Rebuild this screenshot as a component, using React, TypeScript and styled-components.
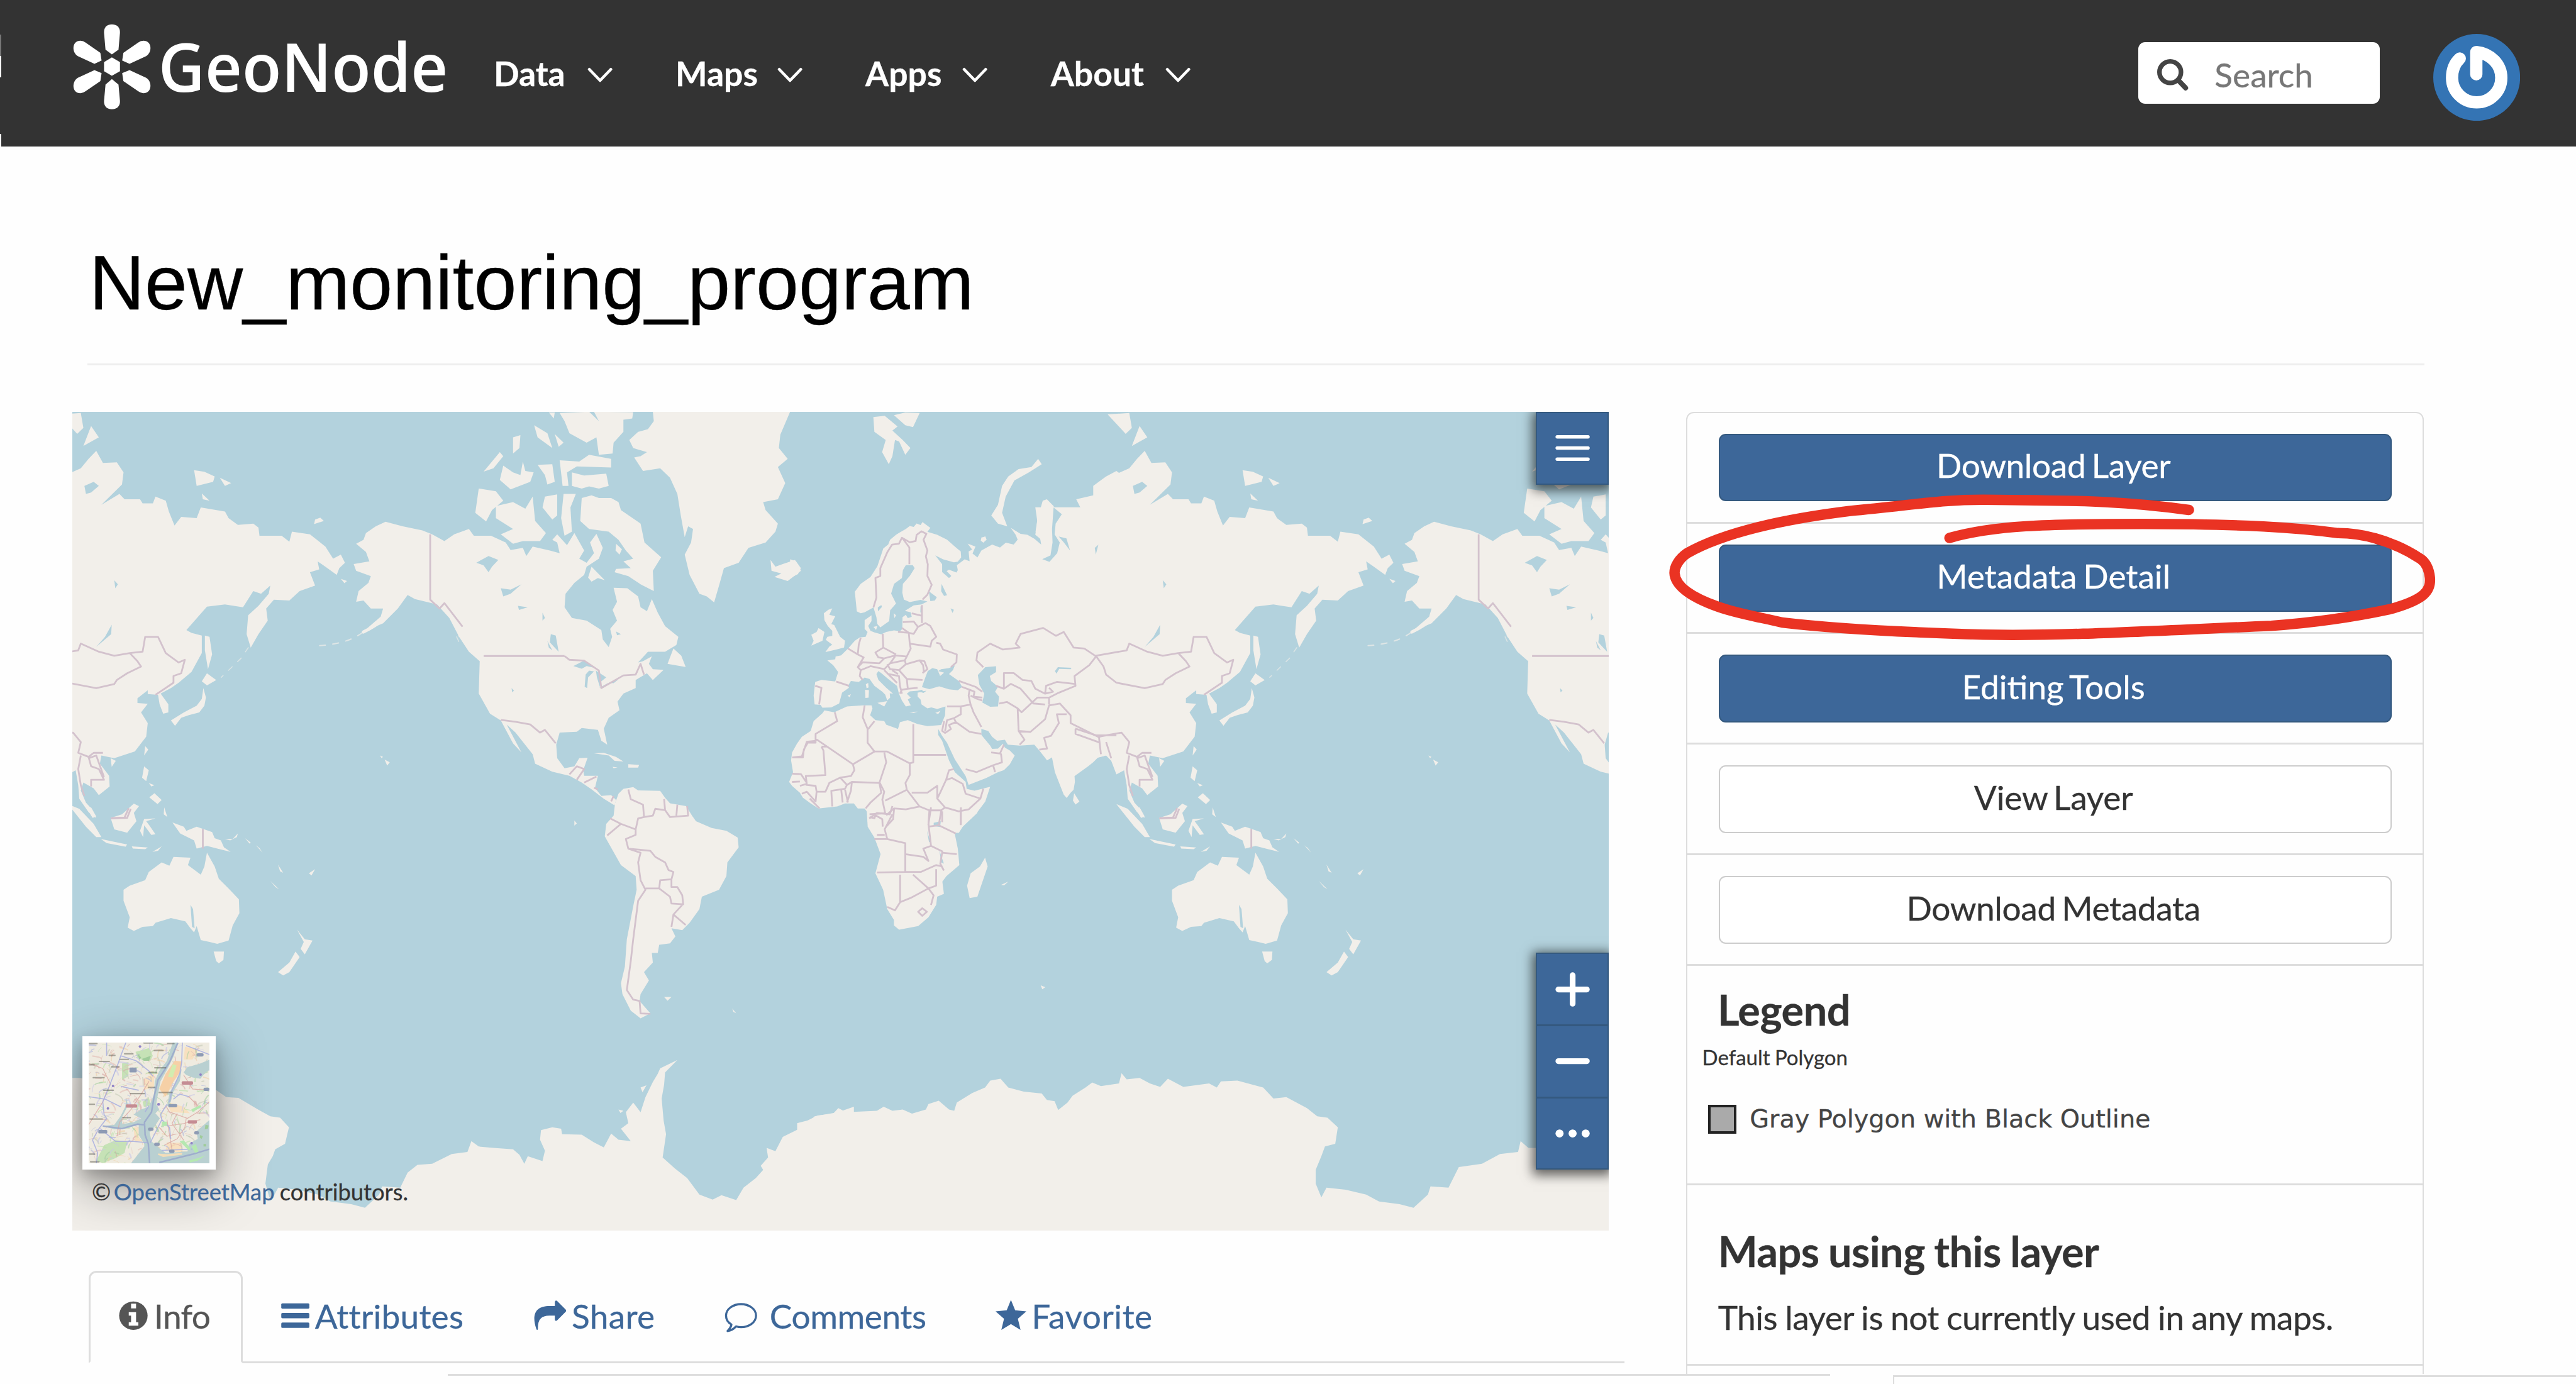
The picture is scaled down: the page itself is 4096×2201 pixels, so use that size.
import React from 'react';
import styled, { createGlobalStyle, css } from 'styled-components';

/* The design grid is 6700 units wide; u() turns grid units into pixels. */
const SCALE = 4096 / 6700;
const u = (n: number) => `${(n * SCALE).toFixed(2)}px`;

const blue = '#3d6799';
const blueDark = '#34597f';
const ink = '#333';
const line = '#ddd';
const water = '#b3d2dd';
const land = '#f2efea';

const GlobalStyle = createGlobalStyle`
  *, *::before, *::after { box-sizing: border-box; }
  html, body { margin: 0; padding: 0; background: #fff; }
  body {
    font-family: Lato, "Open Sans", sans-serif;
    color: ${ink};
    overflow: hidden;
    word-spacing: -0.07em;
    font-variant-ligatures: none;
    -webkit-text-stroke: 0.3px currentColor;
  }
`;

const Page = styled.div`
  position: relative;
  width: 4096px;
  height: 2201px;
  overflow: hidden;
  background: #fefefe;
`;

/* ---------- header ---------- */
const Header = styled.header`
  display: flex;
  align-items: flex-start;
  height: ${u(381)};
  background:
    linear-gradient(
      #333 ${u(90)}, #777 ${u(90)}, #777 ${u(145)}, #fff ${u(145)}, #fff ${u(201)},
      #333 ${u(201)}, #333 ${u(348)}, #fff ${u(348)}
    ) left top / ${u(4)} 100% no-repeat,
    #333;
  color: #fff;
`;

const Logo = styled.svg`
  flex: none;
  width: ${u(1284)};
  height: ${u(381)};
  -webkit-text-stroke: 0;
`;

const NavItem = styled.a<{ $w: number; $text: number }>`
  display: flex;
  align-items: flex-start;
  flex: none;
  width: ${p => u(p.$w)};
  padding-top: ${u(137)};
  font-size: ${u(87.5)};
  line-height: ${u(106)};
  font-weight: 700;
  span { width: ${p => u(p.$text)}; white-space: nowrap; }
  svg { width: ${u(66)}; height: ${u(44)}; margin-top: ${u(36)}; }
`;

const HeaderSpace = styled.div`
  flex: 1;
`;

const SearchBox = styled.div`
  display: flex;
  flex: none;
  width: ${u(629)};
  height: ${u(161)};
  margin-top: ${u(109)};
  border-radius: ${u(18)};
  background: #fff;
  color: #777;
  font-size: ${u(87)};
  line-height: ${u(170)};
  padding-left: ${u(49)};
  svg { width: ${u(82)}; height: ${u(82)}; margin: ${u(45)} ${u(68)} 0 0; }
`;

const Avatar = styled.svg`
  flex: none;
  width: ${u(226)};
  height: ${u(226)};
  margin: ${u(88)} ${u(146)} 0 ${u(138)};
`;

/* ---------- page body ---------- */
const Title = styled.h1`
  margin: ${u(245)} 0 0 ${u(232)};
  font: 400 ${u(200)} / ${u(220)} "Liberation Sans", Arial, sans-serif;
  color: #000;
  white-space: nowrap;
`;

const Rule = styled.hr`
  width: ${u(6077)};
  height: ${u(4)};
  margin: ${u(100)} 0 0 ${u(228)};
  border: 0;
  background: #eee;
`;

const Columns = styled.main`
  display: flex;
  align-items: flex-start;
  height: ${u(2505)};
  margin-top: ${u(119)};
  overflow: hidden;
`;

const MapColumn = styled.section`
  flex: none;
  width: ${u(4037)};
  margin: ${u(2)} 0 0 ${u(188)};
`;

const MapFrame = styled.div`
  position: relative;
  width: ${u(3997)};
  height: ${u(2130)};
  overflow: hidden;
  background: ${water};
`;

const WorldSvg = styled.svg`
  display: block;
  width: 100%;
  height: 100%;
`;

const MapButtons = styled.div<{ $top: number }>`
  position: absolute;
  right: 0;
  top: ${p => u(p.$top)};
  width: ${u(191)};
  background: ${blue};
  border: ${u(4)} solid ${blueDark};
  box-shadow: 0 ${u(6)} ${u(28)} ${u(8)} rgba(0, 0, 0, 0.6);
`;

const MapButton = styled.div<{ $h: number }>`
  display: flex;
  align-items: center;
  justify-content: center;
  height: ${p => u(p.$h)};
  & + & { border-top: ${u(5)} solid ${blueDark}; }
  svg { width: ${u(100)}; height: ${u(100)}; }
`;

const Thumb = styled.div`
  position: absolute;
  left: ${u(26)};
  top: ${u(1625.5)};
  width: ${u(347)};
  height: ${u(346)};
  padding: ${u(16)};
  background: #fff;
  box-shadow: 0 ${u(40)} ${u(130)} ${u(4)} rgba(0, 0, 0, 0.38), 0 ${u(16)} ${u(40)} rgba(0, 0, 0, 0.22);
  svg { display: block; width: 100%; height: 100%; }
`;

const Attribution = styled.div`
  position: absolute;
  left: ${u(51)};
  top: ${u(1995)};
  font-size: ${u(59.5)};
  line-height: ${u(70)};
  white-space: nowrap;
  a { margin-left: ${u(-6)}; color: ${blue}; }
`;

const Tabs = styled.nav`
  display: flex;
  width: ${u(3995)};
  height: ${u(240)};
  margin: ${u(105)} 0 0 ${u(42)};
  font-size: ${u(87)};
  line-height: ${u(106)};
`;

const Tab = styled.a<{ $active?: boolean; $w?: number; $pad: number; $gap: number; $track?: number }>`
  display: flex;
  flex: ${p => (p.$w ? 'none' : '1')};
  width: ${p => (p.$w ? u(p.$w) : 'auto')};
  padding: ${u(65)} 0 0 ${p => u(p.$pad)};
  white-space: nowrap;
  letter-spacing: ${p => u(p.$track ?? 0)};
  color: ${blue};
  border-bottom: ${u(5)} solid ${line};
  ${p =>
    p.$active &&
    css`
      color: #555;
      border: ${u(5)} solid ${line};
      border-bottom-color: transparent;
      border-radius: ${u(20)} ${u(20)} 0 0;
      padding-top: ${u(60)};
    `}
  svg { flex: none; width: ${u(86)}; height: ${u(86)}; margin: ${u(9)} ${p => u(p.$gap)} 0 0; }
`;

/* ---------- sidebar ---------- */
const Panel = styled.aside`
  flex: none;
  width: ${u(1919)};
  height: ${u(2600)};
  margin: ${u(2)} 0 0 ${u(161)};
  border: ${u(4)} solid ${line};
  border-radius: ${u(20)} ${u(20)} 0 0;
`;

const PanelRow = styled.div<{ $h?: number }>`
  height: ${p => u(p.$h ?? 287.7)};
  padding: ${u(54)} ${u(81)} 0 ${u(81)};
  border-bottom: ${u(5)} solid ${line};
`;

const Button = styled.button<{ $primary?: boolean; $track: number }>`
  display: block;
  width: 100%;
  height: ${u(176)};
  padding: 0 ${u(9)} ${u(9)} 0;
  border: ${u(4)} solid ${p => (p.$primary ? blueDark : '#ccc')};
  border-radius: ${u(18)};
  background: ${p => (p.$primary ? blue : '#fff')};
  color: ${p => (p.$primary ? '#fff' : ink)};
  font: 400 ${u(87)} / ${u(158)} Lato, "Open Sans", sans-serif;
  word-spacing: -0.07em;
  letter-spacing: ${p => u(p.$track)};
  text-align: center;
`;

const LegendRow = styled(PanelRow)`
  padding: ${u(49)} 0 0 ${u(38)};
`;

const Heading = styled.h4<{ $indent?: number; $track?: number }>`
  margin: 0 0 0 ${p => u(p.$indent ?? 0)};
  font-size: ${u(109)};
  line-height: ${u(130)};
  font-weight: 700;
  letter-spacing: ${p => u(p.$track ?? 0)};
  white-space: nowrap;
`;

const LegendName = styled.div`
  margin-top: ${u(22)};
  font-size: ${u(54)};
  line-height: ${u(72)};
`;

const LegendItem = styled.div`
  display: flex;
  align-items: center;
  margin: ${u(87)} 0 0 ${u(15)};
  font: 400 ${u(65)} / ${u(78)} "DejaVu Sans", sans-serif;
  word-spacing: 0;
  color: #444;
  white-space: nowrap;
`;

const Swatch = styled.i`
  width: ${u(74)};
  height: ${u(74)};
  margin-right: ${u(35)};
  background: #aaa;
  border: ${u(8)} solid #222;
`;

const UsageRow = styled(PanelRow)`
  padding: ${u(107)} 0 0 ${u(79)};
  p { margin: ${u(55)} 0 0; font-size: ${u(87)}; line-height: ${u(106)}; letter-spacing: ${u(-0.78)}; white-space: nowrap; }
`;

const BottomStrip = styled.div`
  display: flex;
  height: ${u(30)};
  padding-left: ${u(1165)};
`;

const StripLine = styled.div`
  width: ${u(3595)};
  margin-right: ${u(163)};
  border-top: ${u(5)} solid ${line};
`;

const StripBox = styled.div`
  flex: 1;
  margin-top: ${u(4)};
  border: solid ${line};
  border-width: ${u(5)} 0 0 ${u(4)};
`;

const Scribble = styled.svg`
  position: absolute;
  left: ${u(4300)};
  top: ${u(1000)};
  width: ${u(2100)};
  height: ${u(1500)};
  pointer-events: none;
`;

/* ---------- world map data ---------- */
const T_WEST = 'translate(180 1060) scale(1.27551 .70153)';
const T_EAST = 'translate(2100 1060) scale(1.33929 .70153)';
const T_SWEST = 'translate(180 2100) scale(1.27551 .71429)';
const T_SEAST = 'translate(2100 2100) scale(1.33929 .71429)';
const T_MID = 'translate(2060 1350) scale(.5102)';

const europeAfrica =
  'M330 470L320 370 350 330 400 295 435 240 455 180 465 150 490 130 500 105 530 80 545 70 580 50 600 35 620 40 635 22 655 30 665 15 705 45 690 65 740 80 790 105 830 140 860 165 862 195 845 217 825 220 770 205 730 185 765 230 765 270 800 300 812 290 788 265 800 258 838 272 845 260 840 235 880 205 905 215 900 165 918 155 895 125 935 140 920 175 945 195 965 160 1020 130 1060 145 1090 120 1130 130 1150 105 1140 80 1115 45 1165 75 1200 80 1235 100 1270 130 1265 100 1240 80 1250 10 1240 -60 1600 -60 1600 1205 1560 1215 1535 1240 1510 1260 1440 1310 1442 1340 1435 1380 1420 1395 1400 1422 1385 1405 1340 1290 1325 1215 1300 1230 1265 1185 1235 1150 1160 1155 1100 1150 1085 1125 1045 1130 1020 1110 1000 1080 965 1070 965 1100 1010 1155 1020 1172 1050 1170 1075 1145 1085 1165 1110 1180 1135 1205 1110 1250 1080 1280 1050 1290 990 1320 900 1355 885 1310 830 1225 790 1140 765 1105 745 1070 745 1100 765 1130 800 1230 830 1290 885 1340 890 1375 930 1385 1010 1365 985 1440 940 1500 870 1568 850 1600 405 1600 385 1540 395 1510 370 1475 335 1475 315 1450 270 1450 230 1465 135 1475 95 1450 55 1420 40 1395 0 1360 -15 1340 5 1290 -5 1230 0 1190 25 1145 50 1110 95 1080 110 1030 155 990 165 975 215 985 280 955 360 950 405 950 410 965 398 1000 425 1025 470 1030 480 1048 540 1070 550 1035 590 1025 640 1045 690 1055 760 1050 780 1000 782 955 740 968 710 960 690 965 660 945 655 920 640 905 640 885 670 880 662 870 640 875 600 878 585 890 605 910 590 920 605 950 580 955 560 925 545 890 535 850 490 815 455 785 440 775 430 790 440 820 480 860 515 890 498 888 500 910 485 925 475 895 460 880 420 850 395 815 370 808 340 830 300 825 285 850 290 860 255 885 240 940 200 960 155 962 145 947 115 945 110 900 118 830 150 820 220 828 235 780 210 745 180 720 220 715 222 700 250 695 285 660 320 620 345 603 375 600 385 575 370 560 370 515 405 490 405 520 388 545 400 570 420 578 455 587 480 575 520 567 550 572 562 560 563 500 580 488 590 505 610 498 605 475 575 468 620 440 660 435 690 420 655 412 600 423 570 410 562 375 565 330 600 290 625 250 615 235 580 235 565 260 560 300 520 330 505 380 530 430 500 465 495 520 450 552 435 535 430 500 415 450 370 475 350 480Z';
const europeIslands =
  'M185 462L162 480 165 515 182 545 205 570 205 595 180 600 172 615 205 640 190 650 170 678 225 665 265 655 270 620 245 600 215 540 200 535 220 495 190 488 205 455ZM135 555L165 575 155 620 98 645 110 620 98 590 125 575ZM372 870L392 872 390 910 374 912ZM376 842L388 835 390 858 380 862ZM435 937L485 928 470 955ZM598 983L640 982 620 988ZM730 988L757 978 745 994ZM1438 1398L1465 1440 1445 1455 1432 1435ZM965 95L985 88 992 105 975 120 962 110ZM415 550L435 545 428 565ZM518 480L530 490 522 505ZM283 900L300 893 293 908ZM-10 205L20 215 45 250 30 280 -10 300Z';
const europeWater =
  'M662 857L680 805 692 775 715 760 740 765 755 800 775 783 745 775 760 765 800 760 830 745 820 770 800 790 850 825 867 855 845 873 800 868 750 853 700 867ZM985 755L1040 750 1040 780 1008 800 1015 825 1050 855 1035 880 1055 905 1050 955 1010 957 970 935 980 890 955 845 947 795ZM650 880L685 875 670 886ZM697 368L738 398 728 415 705 418ZM762 330L790 388 775 392 760 368ZM437 450L455 438 458 448 438 470ZM808 455L825 462 818 478ZM722 1548L758 1540 755 1570 722 1565ZM1340 775L1355 755 1425 758 1420 765 1362 764 1348 788ZM655 445L662 445 662 478 654 475Z';
const asia =
  'M460 600L458 505 443 460 447 410 457 345 465 340 478 365 485 400 500 370 515 375 535 410 540 460 534 440 530 410 530 370 522 340 555 325 555 290 580 255 600 235 605 242 625 225 640 190 655 160 668 205 695 203 708 240 705 285 665 360 700 320 710 340 740 340 745 355 765 355 770 330 790 345 796 385 807 437 820 405 850 410 858 370 905 385 912 410 930 435 960 430 970 445 972 475 1015 475 1030 497 1035 460 1070 470 1100 515 1115 560 1130 545 1138 575 1127 595 1122 620 1100 590 1085 570 1088 600 1070 610 1080 660 1050 680 1030 715 1000 712 985 745 988 790 970 840 955 890 947 840 950 770 970 735 990 690 993 660 975 690 960 680 940 740 905 730 870 738 830 825 840 835 860 845 860 910 840 980 815 1020 800 1040 780 1060 795 1100 795 1130 785 1135 778 1100 775 1065 755 1062 755 1048 735 1078 735 1095 755 1098 742 1130 755 1170 752 1220 730 1275 690 1300 665 1290 662 1320 680 1365 681 1405 660 1437 650 1412 630 1390 625 1420 635 1465 647 1490 655 1522 640 1500 622 1450 620 1400 615 1345 600 1360 590 1310 580 1290 560 1300 545 1200 440 1180 430 600Z';
const asiaIslands =
  'M448 190L455 210 430 240 402 270 385 330 378 390 388 440 370 430 357 400 370 360 378 290 390 255 410 228 435 220ZM128 35L150 30 175 70 165 85 185 120 200 150 190 175 178 125 170 120 165 180 158 210 145 165 152 120 130 90ZM168 28L190 18 218 20 205 72 190 65ZM583 25L625 20 630 75 618 97 600 60ZM645 68L660 110 630 142ZM845 232L865 238 885 255 882 275 850 290ZM895 260L917 280 905 290ZM860 318L875 345 862 340ZM1080 415L1090 408 1097 420 1078 432ZM866 845L875 850 880 915 872 970 866 900ZM870 985L888 1010 870 1030 860 1015ZM863 1040L868 1075 865 1105 855 1130 835 1140 820 1150 808 1180 800 1160 825 1130 850 1105 860 1080ZM750 1255L756 1268 748 1290ZM683 1300L693 1310 685 1332ZM748 1330L757 1345 752 1385 744 1372ZM768 1430L782 1455 774 1470 758 1445ZM757 1392L768 1400 762 1405ZM338 480L347 485 342 500ZM1130 635l12 8 -5 8ZM1215 1305l10 10 -5 12ZM1206 1290l6 5 -3 4Z';
const asiaWater =
  'M478 370L494 395 482 430 480 470 490 500 485 540 470 572 456 562 472 548 476 500 475 450ZM488 478L503 485 510 530 498 500ZM685 805L684 840 655 887 672 850ZM632 290L650 275 660 290 645 315 635 320ZM558 520L565 508 560 545ZM690 640L697 655 692 670Z';
const southAfricaEtc =
  'M115 5L117 70 130 110 142 170 132 240 147 300 155 370 168 410 168 430 178 445 215 432 235 400 250 355 252 325 265 315 262 270 270 250 295 210 292 150 286 95 301 70 330 20 330 -20 130 -20ZM345 183L350 215 330 325 315 330 310 285 317 240 335 215ZM600 -12L622 5 650 60 665 108 655 108 635 70ZM636 2L648 38 655 33 645 0ZM683 38L705 25 728 -14 738 -5 728 20 733 50 715 92 690 80ZM664 115L690 125 715 135 712 143 675 130ZM724 142L755 146 750 152 726 150ZM764 162L782 142 775 158ZM748 42L770 40 752 50 758 65 770 98 762 100 748 65 746 108 740 85ZM803 55L825 70 830 85 850 70 880 90 885 112 897 120 903 145 916 162 890 150 870 140 850 150 845 120 818 95ZM905 115L920 115 930 95 928 108 915 120ZM944 112L955 128 953 132ZM965 138L972 148 978 165ZM708 300L720 285 750 265 757 235 782 200 797 212 805 180 838 183 833 210 858 245 865 215 870 165 885 215 893 260 912 295 932 335 933 385 920 430 912 485 890 497 875 490 858 483 850 432 845 455 838 440 828 415 800 403 770 420 765 432 745 435 728 450 716 438 720 400 708 340ZM883 525L903 525 902 555 893 568 888 560ZM1045 445L1060 480 1075 485 1060 535 1052 515 1058 490ZM1042 525L1050 545 1030 600 1018 612 1008 600 1030 565ZM1068 240L1080 225 1073 248ZM993 268L1010 298 1003 290ZM1008 208l10 30 -6 -5ZM453 648L462 655 456 662ZM376 282l14 -12 -8 14ZM787 0l6 35 -7 -10Z';
const northAmerica =
  'M645 423L680 440 720 455 740 470 765 495 785 470 815 450 825 475 860 475 890 500 900 528 925 520 932 550 945 515 980 530 1000 540 995 500 985 490 995 470 1015 510 1030 465 1050 530 1040 560 1055 575 1070 540 1062 500 1075 468 1088 520 1080 560 1055 590 1050 620 1030 650 1012 690 1010 740 1025 780 1055 790 1085 825 1088 860 1100 888 1107 850 1103 820 1117 790 1108 750 1117 720 1110 668 1138 670 1160 700 1165 740 1178 755 1188 710 1200 760 1215 810 1242 850 1238 880 1215 905 1180 905 1160 945 1170 940 1188 922 1182 950 1190 970 1212 972 1190 1010 1178 985 1155 1010 1155 1040 1130 1060 1118 1090 1122 1122 1100 1150 1090 1190 1097 1250 1085 1235 1078 1195 1045 1188 1035 1202 1000 1205 993 1250 995 1300 1010 1337 1030 1330 1040 1300 1057 1298 1048 1345 1050 1365 1078 1365 1072 1410 1085 1440 1105 1437 1115 1455 1112 1475 1090 1450 1065 1415 1045 1390 1020 1365 985 1350 950 1320 945 1285 910 1205 892 1175 922 1278 905 1245 880 1160 858 1135 835 1060 837 940 815 905 795 850 775 780 750 730 705 710 690 695 670 745 640 800 600 830 635 775 640 745 615 745 600 715 585 720 590 680 610 650 615 625 585 605 580 580 612 570 605 535 585 505 600 490 605 465 625 440Z';
const arctic =
  'M1045 335L1065 325 1080 335 1105 335 1120 350 1125 380 1165 430 1173 500 1207 555 1190 605 1192 680 1165 655 1140 625 1112 610 1115 598 1145 595 1130 570 1150 560 1135 530 1120 490 1100 460 1060 450 1042 420ZM870 365L905 350 930 375 945 330 950 420 972 465 960 495 925 495 905 505 880 470 905 450 870 410ZM835 300L870 310 885 345 862 380 850 422 828 390ZM1008 320L1033 320 1022 370 1025 460 1010 475 1003 410ZM970 330L995 322 995 400 985 415 965 370ZM1065 590L1092 640 1078 632 1065 645 1058 630ZM878 165L885 180 865 225 845 237ZM885 215L905 240 920 250 925 200 930 235 947 240 940 275 900 303 878 268ZM948 65L975 95 985 150 955 110ZM905 110L920 102 918 150 905 170ZM990 98L1008 130 998 145ZM955 212L985 210 990 275 975 285 970 250ZM1000 20L1060 15 1080 50 1070 15 1150 17 1148 40 1130 45 1130 90 1110 130 1108 170 1080 175 1075 110 1055 130 1020 95 1010 50ZM978 18L990 18 988 40ZM1025 240L1050 252 1095 245 1100 290 1080 300 1060 292 1045 300 1025 290ZM1000 195L1040 200 1060 175 1105 190 1105 222 1035 218 1015 240 1018 290 1006 290ZM1232 893L1248 920 1257 962 1220 950ZM1115 505l12 20 -5 20 -8 -15ZM1070 1282L1090 1280 1115 1295 1130 1312 1112 1310 1100 1290ZM1140 1322L1162 1325 1160 1335 1140 1335ZM1108 1332l10 2 -8 3ZM1190 15L1192 50 1180 80 1160 90 1142 120 1150 150 1178 165 1165 180 1152 185 1170 235 1205 225 1225 260 1240 320 1247 400 1255 480 1262 440 1272 450 1268 500 1255 545 1265 620 1285 690 1300 700 1315 722 1325 660 1335 595 1365 575 1385 520 1420 500 1440 460 1445 430 1420 380 1415 350 1445 340 1460 280 1445 220 1465 190 1447 150 1450 100 1470 15ZM1430 565L1440 590 1455 580 1480 565 1492 605 1465 643 1438 628 1452 615 1432 605Z';
const americaWater =
  'M1028 958L1050 938 1072 965 1055 958 1045 968ZM1060 975L1070 978 1058 1000 1056 1040 1051 1035 1053 990ZM1074 975L1095 1000 1085 1015 1082 1035 1076 1000ZM1080 1040L1100 1020 1095 1030ZM1100 1020L1120 1008 1110 1022ZM830 575L855 550 875 565 862 590 855 610 845 585ZM880 670L900 675 922 655 900 690 885 700ZM915 735L935 740 917 750ZM982 840L992 845 998 905 990 890 980 870ZM975 865L985 900 978 890ZM965 760l5 20 -5 10ZM1115 830l10 10 -8 4ZM902 1040l5 10 -4 5Z';
const southAmerica =
  'M1113 -15L1120 -50 1130 -68 1150 -74 1160 -62 1205 -60 1215 -35 1225 -15 1258 -5 1270 30 1278 50 1310 75 1340 85 1363 110 1365 145 1342 200 1340 250 1325 300 1290 325 1285 370 1265 420 1250 447 1228 440 1236 470 1225 495 1203 500 1200 530 1188 530 1190 565 1172 600 1182 630 1165 680 1163 705 1185 750 1165 768 1145 740 1128 680 1125 640 1133 580 1137 480 1150 360 1157 300 1155 250 1125 210 1092 105 1095 60 1110 30ZM1213 690l15 0 -8 14ZM1352 732l8 18 -6 -6ZM1030 48l5 10 -5 8Z';
const antarcticWest =
  'M-20 985L20 985 300 1030 320 1055 345 1058 385 1100 410 1125 430 1130 448 1165 440 1225 420 1245 415 1270 405 1300 400 1370 408 1420 417 1415 426 1385 465 1392 507 1410 533 1435 575 1445 603 1458 632 1410 638 1380 675 1385 690 1330 710 1302 740 1298 780 1262 812 1255 820 1215 835 1235 865 1240 905 1245 918 1265 928 1298 935 1270 965 1288 970 1250 960 1210 962 1175 985 1165 1003 1170 1005 1190 1045 1192 1070 1220 1090 1238 1105 1188 1120 1210 1145 1215 1125 1170 1140 1150 1135 1110 1150 1075 1165 1110 1175 1055 1190 1000 1200 970 1205 950 1240 920 1215 965 1213 1010 1208 1060 1212 1140 1217 1190 1210 1275 1235 1315 1260 1350 1285 1410 1312 1428 1330 1412 1360 1430 1375 1385 1400 1350 1415 1320 1410 1305 1425 1275 1422 1240 1440 1252 1455 1200 1500 1160 1520 1125 1568 1110 1600 1090 1600 1560 -20 1560ZM1165 1020l12 -8 -8 25ZM1120 1100l10 5 -6 8Z';
const antarcticEast =
  'M-20 1150L0 1140 20 1122 50 1115 60 1095 75 1110 135 1105 148 1090 165 1105 185 1100 203 1115 230 1100 235 1080 255 1068 275 1100 285 1105 290 1075 320 1040 345 1020 355 995 375 988 390 1020 420 1035 455 1042 465 1065 480 1070 487 1102 505 1075 515 1050 540 1020 553 1002 570 1015 605 1005 610 968 620 990 645 985 665 1005 685 1018 700 988 730 1018 780 1005 795 1020 803 998 835 995 885 1020 905 1060 930 1055 970 1095 990 1125 1010 1130 1030 1165 1025 1225 1005 1235 998 1270 987 1320 987 1370 998 1420 1008 1385 1045 1392 1085 1410 1110 1435 1150 1445 1177 1458 1205 1410 1210 1380 1245 1385 1265 1310 1310 1298 1345 1262 1380 1255 1385 1215 1400 1240 1600 1245 1600 1560 -20 1560Z';

const bordersMid =
  'M415 450L430 400 425 300 450 290 450 250 485 170 510 130 545 125 560 95 600 118 630 112 635 80 660 62 685 75 670 105 690 160 682 190 692 230 690 290 712 335 690 385 665 410M565 100L598 145 598 230M662 438V530M565 525L620 522 642 550 620 585 595 580M610 480L660 492M560 555L595 580 540 575M642 550L680 530 705 545 735 600 712 620 705 650 600 635 595 580M600 635L605 660 575 720M735 630L755 635 770 665 840 690 838 730 810 755M462 585L465 655 425 680 440 705 470 710 525 695 580 700M465 655L530 690M470 710L445 735 360 730 335 755 350 770 400 750 470 765 500 735 525 700M335 755L365 705 335 690 340 640 350 605M335 690L285 660M350 770L345 800 360 820M225 828L290 850M118 850L150 860 138 945M500 735L550 725 575 720 580 740 545 770 500 765 485 740M580 740L650 720 675 725 690 765 665 785M545 770L585 815 665 820M585 815L590 865 640 860M490 790L545 800 550 850 560 890M470 770L535 835M510 770L540 790M590 865L560 870 550 890M650 720L668 745 672 780M850 825L935 855 970 880M865 855L905 870 900 900 910 945 860 955 790 955M905 870L930 880 925 905 970 910M910 900L940 915 970 925M910 945L925 985 965 1060M860 955V995L825 1015 790 1025 780 1080M825 1015L835 1035 905 1085 965 1095M835 1035L800 1050 810 1070 780 1090 765 1080 775 1030M975 755L940 720 945 680 1010 635 1075 665 1160 655 1140 635 1165 585 1280 555 1345 595 1385 575 1435 655 1490 660 1550 700 1515 745 1440 800 1445 850 1360 885 1310 910 1250 910 1170 985 1150 965 1095 932 1055 940M1040 850L1080 865V785L1130 785 1175 820 1220 825 1240 865 1290 890 1295 850 1350 830 1440 840M1080 865L1115 840 1165 865 1230 940 1290 945M1290 890L1330 880 1310 860M1150 965L1155 1080 1185 1125 1160 1150M1155 1080L1215 1085 1290 1020 1310 950 1365 940 1420 1000 1420 1040 1570 1115M1400 995H1350L1360 1040 1320 1105 1285 1115 1300 1170 1260 1175M1445 1070V1095L1570 1140M1310 910V945M1080 1150L1060 1195 1015 1190M1065 1195L1070 1240 1025 1255 940 1290 885 1275M1025 1255L1035 1290M618 1045V1240L600 1245 485 1185 420 1185 385 1140V1070L360 1010 370 950M388 1070L420 1030M618 1202H785M218 985L230 1030 120 1095V1120L310 1250 420 1185M120 1130L75 1135 50 1210 0 1215M120 1095L120 1140 80 1140 60 1175 55 1215 5 1215M150 1160L160 1180 170 1305 70 1310 75 1350 40 1360M180 1160H150M0 1298L45 1300 75 1345M310 1250L318 1280 300 1310 245 1318 190 1345 170 1390 125 1390 120 1360 70 1355M245 1318L280 1355 270 1375 200 1385 205 1465M280 1355L305 1340 445 1345 480 1240 470 1190M250 1375L258 1445M270 1380L285 1445M305 1340L300 1385 280 1445M445 1345L455 1395 400 1445 375 1475M445 1340L470 1390 460 1430 475 1500 395 1505M600 1245V1305L578 1345 585 1380 475 1435M585 1380L650 1465 580 1480 520 1475 480 1510M610 1395L690 1395 740 1360 740 1425 780 1470 850 1490 900 1480 960 1425 975 1375M785 1330L755 1395 740 1425M785 1330L815 1320 870 1350 885 1400 960 1425M785 1330L800 1280 825 1275M650 1465L700 1485 760 1485 780 1470M700 1485L695 1560M765 1490V1545M860 1490V1560M125 1390L120 1440 75 1390 50 1400M90 1425L140 1475M0 1340L40 1338M520 1480L515 1530 480 1568M395 1520L420 1525 425 1510 460 1530 462 1568';
const bordersAsia =
  'M560 920L620 900 625 875 660 905 690 920 720 910 735 940 742 960 715 985 695 1010 690 1025 655 1040 600 1020 580 990 575 960ZM720 910L745 905 750 850 775 850 790 910 815 945 827 935 820 985 805 995 805 1020 770 1065M566 1220L610 1205 625 1240 620 1280 640 1295 650 1280 668 1280M566 1220L570 1285M580 1240L590 1300M625 1290L620 1340 625 1400 632 1440M640 1295L645 1330 660 1340 670 1380 645 1380 645 1405M640 1300L655 1290 670 1370M520 1190L560 1215 600 1215M685 1522L710 1520 718 1485';
const bordersAmerica =
  'M736 470V712L755 745 765 725 802 812M845 921H1010M1010 921L1020 935 1050 938 1080 975 1085 1040 1130 993 1155 990 1165 950 1172 990M880 1158L910 1165 940 1175 960 1205 970 1195 992 1245M1020 1360L1035 1330 1050 1340 1035 1380M1050 1390L1075 1368M1070 1410L1078 1415M1110 1440L1105 1460';
const bordersSouthAmerica =
  'M1140 -65L1145 -30 1170 -10 1172 35 1160 40 1155 80 1125 60 1097 102M1103 40L1125 60M1155 80V100L1135 115 1140 150 1165 165 1160 200 1165 265 1175 300 1160 340 1150 480 1145 560 1137 665 1150 700 1163 705 1165 750 1185 752M1140 150L1185 158 1195 180 1215 200 1222 228 1232 235 1228 262 1205 265 1203 295H1175M1203 295L1225 325 1228 350 1252 353 1250 320 1240 290 1228 290V262M1250 355L1232 390 1228 435M1232 390L1257 428M1172 35L1190 30 1195 5 1215 10 1213 -30M1215 10L1225 35 1262 30 1260 -5M1240 -10L1238 30';
const bordersSouthAfrica =
  'M120 40L135 20 160 25 165 -5M130 115L155 115 190 130V235L135 237M155 115L150 80 165 25M135 100H150M190 235H220L250 210 262 215M190 170L225 180 235 195 225 150 240 140 235 60 240 0M262 165L290 170M240 140L262 160 258 205 265 230M180 245L180 345 170 375 155 362M180 345L200 330 235 295 205 245M235 295L245 320 240 355M235 295L250 285V225M215 380L223 367 232 380 223 395ZM255 65L288 95M298 0V60M862 78V150M235 70L255 65 260 10M683 40L715 38 722 5';

const NS = { vectorEffect: 'non-scaling-stroke' } as React.CSSProperties;

const World = () => (
  <WorldSvg viewBox="188 1071 3997 2130" preserveAspectRatio="none">
    <defs>
      <g id="continents">
        <g fill={land}>
          <g transform={T_EAST}><path d={asia} /><path d={asiaIslands} /></g>
          <g transform={T_SEAST}><path d={southAfricaEtc} /></g>
          <g transform={T_MID}><path d={europeAfrica} /><path d={europeIslands} /></g>
          <g transform={T_WEST}><path d={northAmerica} /><path d={arctic} /></g>
          <g transform={T_SWEST}><path d={southAmerica} /></g>
        </g>
        <g fill={water}>
          <g transform={T_EAST}><path d={asiaWater} /></g>
          <g transform={T_MID}><path d={europeWater} /></g>
          <g transform={T_WEST}><path d={americaWater} /></g>
          <g transform={T_SEAST}><path d="M232 85L240 130 236 125ZM256 155L265 205 260 200ZM838 355l5 15 3 70 -5 -5Z" /></g>
        </g>
        <g fill="none" stroke="#d3c2cd" strokeWidth="2.8" strokeLinejoin="round">
          <g transform={T_MID}><path d={bordersMid} style={NS} /></g>
          <g transform={T_EAST}><path d={bordersAsia} style={NS} /></g>
          <g transform={T_WEST}><path d={bordersAmerica} style={NS} /></g>
          <g transform={T_SWEST}><path d={bordersSouthAmerica} style={NS} /></g>
          <g transform={T_SEAST}><path d={bordersSouthAfrica} style={NS} /></g>
        </g>
        <g transform={T_WEST} fill="none" stroke={land} strokeLinecap="round">
          <path d="M640 785Q625 810 600 832" strokeWidth="5" style={NS} />
          <path d="M598 834Q575 865 540 876T500 880" strokeWidth="2" strokeDasharray="9 12" opacity=".7" style={NS} />
          <path d="M365 890L350 930 310 1000M790 850L800 890M785 800L795 850" strokeWidth="1.6" strokeDasharray="8 12" opacity=".6" style={NS} />
        </g>
      </g>
    </defs>
    <rect x="187" y="1071" width="3998" height="2130" fill={water} />
    <use href="#continents" />
    <use href="#continents" x="-2727" />
    <use href="#continents" x="2727" />
    <g fill={land}>
      <path transform={T_SWEST} d={antarcticWest} />
      <path transform={T_SEAST} d={antarcticEast} />
    </g>
  </WorldSvg>
);

/* ---------- basemap thumbnail ---------- */
const streets = (() => {
  let seed = 11;
  const rnd = () => {
    seed = (seed * 16807) % 2147483647;
    return seed / 2147483647;
  };
  const colors = ['#d9a9a6', '#e3bdb4', '#a9b0dd', '#b9e0a9', '#c8c6e8', '#c5c9b8', '#a3cfa0', '#efcfa6'];
  return Array.from({ length: 420 }, () => {
    const x = 90 + rnd() * 940;
    const y = 97 + rnd() * 940;
    const a = rnd() * Math.PI;
    const l = 20 + rnd() * 60;
    return {
      d: `M${x.toFixed(0)} ${y.toFixed(0)}q${(Math.cos(a) * l).toFixed(0)} ${(Math.sin(a) * l * 0.4).toFixed(0)} ${(Math.cos(a) * l * 1.1).toFixed(0)} ${(Math.sin(a) * l).toFixed(0)}`,
      c: colors[Math.floor(rnd() * colors.length)],
      w: 3 + rnd() * 9,
    };
  });
})();

const labels: [number, number, number][] = [
  [90, 106, 70], [515, 100, 80], [700, 106, 60], [595, 160, 80], [245, 198, 55], [365, 185, 75], [168, 245, 88], [330, 229, 75],
  [90, 272, 48], [265, 287, 65], [600, 295, 95], [555, 332, 70], [120, 372, 95], [200, 470, 88], [410, 496, 120], [635, 488, 110],
  [550, 448, 60], [90, 580, 50], [95, 695, 105], [350, 684, 70], [90, 970, 52], [100, 1030, 75],
];

const CityMap = () => (
  <svg viewBox="90 97 944 944" preserveAspectRatio="none">
    <rect x="90" y="97" width="944" height="944" fill="#efebe0" />
    <g fill="#c6e2b6">
      <path d="M455 170L560 140 590 200 570 240 520 240 470 215ZM350 260L400 250 400 360 350 390ZM210 900L300 860 390 870 370 960 300 1000 200 1040 150 1020ZM510 560L560 530 575 590 520 600Z" />
    </g>
    <g fill="#f8e0c0">
      <path d="M520 380L600 340 600 440 520 470ZM700 560L830 600 880 650 730 640ZM840 130L940 150 900 230 830 230ZM440 760L480 760 480 850 520 870 450 870ZM700 880L820 880 820 960 690 940Z" />
    </g>
    <g>
      {streets.map((s, i) => (
        <path key={i} d={s.d} stroke={s.c} strokeWidth={s.w} fill="none" opacity=".6" />
      ))}
    </g>
    <path d="M760 240L815 245 800 330 740 420 690 520 640 460 690 340Z" fill="#f6d0a6" />
    <path d="M745 265L775 275 745 370 708 365Z" fill="#d2ecb0" />
    <g fill="#b9d0d1">
      <path d="M745 97H785L750 210 700 310 650 400 630 500 615 580 640 620 610 650 645 690 600 760 565 800 580 870 650 930 690 960 860 950 870 890 940 850 930 790 1034 700V1041H420L530 900 480 820 480 740 380 770 290 775 200 750 290 740 340 670 375 600 385 530 395 590 350 680 350 735 440 720 500 690 440 660 500 620 560 600 600 500 605 400 640 320 700 240Z" />
      <path d="M830 330L860 290 960 260 1034 230V310L1000 330 960 380 900 370 850 350ZM815 300L800 400 750 480 730 560 700 600 720 490 770 400Z" />
    </g>
    <g fill="none" stroke="#dba9a3" strokeWidth="6" opacity=".85">
      <path d="M690 590L720 640 860 690 940 640 1030 560M700 700L740 940M850 690L840 760 780 850 680 900M700 750L830 730 960 700M780 650L740 730 830 860M640 760L700 830 820 800M560 400L500 500 420 620 330 720 310 830M90 260L200 300 260 420 200 560 90 740M830 350L900 460 1030 470M870 520L950 600" />
    </g>
    <g fill="none" stroke="#a8aee0" strokeWidth="8" opacity=".85">
      <path d="M380 97L340 200 320 260 250 440 200 560 210 660 230 690 170 770 120 860 160 960 150 1040M340 200L460 240 560 320 590 360M820 97L815 250 800 340 740 470 720 560M90 520L220 540 340 600M340 440L480 470M180 770L300 870 440 870 550 880M700 580L650 660 660 700 600 820 570 880M660 700L720 760 730 850M560 590L530 640M870 520L800 500 750 540M850 120L1030 190M230 97V200M660 940L900 930" />
      <path d="M785 100L720 250 630 390 600 520 580 640 525 720 530 820 555 890 565 1040M640 1035L900 970 1034 930M200 750L350 770 470 735 520 740" stroke="#9aa7cc" strokeWidth="12" />
    </g>
    <path d="M630 965L700 970 820 960 815 975 670 992 630 975Z" fill="#f3ddb9" />
    <g fill="#b5e8b0"><path d="M800 870L830 860 890 930 870 940ZM890 910L925 890 945 950 920 960ZM870 1020L940 1000 1000 980 940 1020 880 1035ZM890 620L960 585 970 600 900 640ZM660 715L700 715 700 750 660 750Z" /></g>
    <g fill="#9fcb9a"><path d="M470 180L500 215 485 230ZM505 225L575 200 560 240 520 240ZM960 820l20 10 -10 20 -15 -10ZM1000 740l25 5 -5 25 -25 5ZM985 890l20 0 0 20 -20 0Z" /></g>
    <g fill="#5e5e55" opacity=".5">
      {labels.map(([x, y, w], i) => (
        <rect key={i} x={x} y={y - 6} width={w} height="11" rx="5" />
      ))}
    </g>
    <g fill="#c58c93">
      <rect x="380" y="580" width="88" height="26" rx="8" /><rect x="815" y="400" width="88" height="26" rx="8" /><rect x="862" y="704" width="72" height="26" rx="8" />
    </g>
    <g fill="#8e9bb4">
      <rect x="408" y="292" width="56" height="38" rx="6" /><rect x="710" y="578" width="70" height="26" rx="10" /><rect x="552" y="762" width="44" height="26" rx="12" /><rect x="165" y="780" width="70" height="28" rx="8" /><rect x="716" y="934" width="44" height="26" rx="12" /><rect x="600" y="880" width="44" height="26" rx="12" /><rect x="930" y="180" width="56" height="26" rx="12" /><rect x="912" y="790" width="38" height="26" rx="12" /><rect x="985" y="450" width="46" height="26" rx="10" />
    </g>
    <g fill="#8f82c6">
      <circle cx="490" cy="128" r="10" /><circle cx="280" cy="436" r="10" /><circle cx="240" cy="612" r="10" /><circle cx="962" cy="348" r="10" /><circle cx="635" cy="580" r="11" /><circle cx="892" cy="884" r="10" />
    </g>
  </svg>
);

/* ---------- icons ---------- */
const Chevron = () => (
  <svg viewBox="0 0 66 44" fill="none" stroke="#fff" strokeWidth="7.5" strokeLinecap="round" strokeLinejoin="round">
    <path d="M5 7L33 36 61 7" />
  </svg>
);

const InfoIcon = () => (
  <svg viewBox="0 0 86 86">
    <circle cx="41" cy="43" r="37" fill="currentColor" />
    <path d="M35 12H48V24H35ZM29 34H48V60H54V69H29V60H35V43H29Z" fill="#fff" />
  </svg>
);
const BarsIcon = () => (
  <svg viewBox="0 0 86 86" fill="currentColor">
    <rect x="2" y="11" width="73" height="14" rx="3" /><rect x="2" y="36" width="73" height="14" rx="3" /><rect x="2" y="61" width="73" height="14" rx="3" />
  </svg>
);
const ShareIcon = () => (
  <svg viewBox="0 0 86 86" fill="currentColor">
    <path d="M57 5Q59 2 62 5L84 27Q87 30 84 33L62 55Q57 59 56 53V43H42C20 43 11 54 12 78Q10 82 8 78C-6 38 8 18 42 18H56V8Z" />
  </svg>
);
const CommentIcon = () => (
  <svg viewBox="0 0 86 86" fill="none" stroke="currentColor" strokeWidth="5.5" strokeLinejoin="round">
    <path d="M43 13C63 13 82 25 82 43S63 73 43 73C38 73 34 72 30 71 23 79 16 82 8 83 14 77 17 72 18 66 9 61 4 52 4 43 4 25 23 13 43 13Z" />
  </svg>
);
const StarIcon = () => (
  <svg viewBox="0 0 86 86" fill="currentColor">
    <path d="M40 2L51 29 80 32 58 51 65 80 40 65 15 80 22 51 0 32 29 29Z" />
  </svg>
);

const menu: [string, number, number][] = [
  ['Data', 473, 243],
  ['Maps', 494, 265],
  ['Apps', 482, 251],
  ['About', 400, 298],
];

const actions: [string, boolean, number][] = [
  ['Download Layer', true, -0.6],
  ['Metadata Detail', true, 0],
  ['Editing Tools', true, 0],
  ['View Layer', false, -0.3],
  ['Download Metadata', false, -0.6],
];

export default function App() {
  return (
    <Page>
      <GlobalStyle />
      <Header>
        <Logo viewBox="0 0 1284 381">
          <g fill="#fff">
            <g transform="translate(180 40) scale(.6378 .3333)">
              <path d="M174 70C195 70 208 95 207 135L201 268 174 305 148 268 142 135C141 95 153 70 174 70Z" />
              <path d="M174 733C195 733 208 708 207 668L201 540 174 497 148 540 142 668C141 708 153 733 174 733Z" />
              <path d="M174 328L207 365V436L174 471 142 436V365Z" />
              <path d="M46 198Q57 198 67 213L127 292 132 353 103 378 35 318C10 290 10 198 46 198Z" />
              <path d="M302 198Q291 198 281 213L221 292 216 353 246 378 314 318C339 290 339 198 302 198Z" />
              <path d="M46 607Q57 607 67 592L127 513 132 450 103 427 35 487C10 515 10 607 46 607Z" />
              <path d="M302 607Q291 607 281 592L221 513 216 450 246 427 314 487C339 515 339 607 302 607Z" />
            </g>
            <text x="412" y="239" fontFamily="'Open Sans'" fontWeight="600" fontSize="176" textLength="753" lengthAdjust="spacingAndGlyphs">GeoNode</text>
          </g>
        </Logo>
        {menu.map(([label, w, text]) => (
          <NavItem key={label} $w={w} $text={text}>
            <span>{label}</span>
            <Chevron />
          </NavItem>
        ))}
        <HeaderSpace />
        <SearchBox>
          <svg viewBox="0 0 82 82" fill="none" stroke="#444" strokeLinecap="round">
            <circle cx="34" cy="34" r="28" strokeWidth="12" />
            <path d="M56 56L74 75" strokeWidth="13" />
          </svg>
          Search
        </SearchBox>
        <Avatar viewBox="0 0 226 226">
          <circle cx="113" cy="113" r="113" fill="#3474b4" />
          <path d="M112 105V47C150 51 177 80 177 114A64 64 0 0 1 49 114C49 92 57 75 69 64" fill="none" stroke="#fff" strokeWidth="32" strokeLinecap="round" strokeLinejoin="round" />
        </Avatar>
      </Header>

      <Title>New_monitoring_program</Title>
      <Rule />

      <Columns>
        <MapColumn>
          <MapFrame>
            <World />
            <Thumb><CityMap /></Thumb>
            <Attribution>© <a>OpenStreetMap</a> contributors.</Attribution>
            <MapButtons $top={0}>
              <MapButton $h={184}>
                <svg viewBox="0 0 100 100" stroke="#fff" strokeWidth="9" strokeLinecap="round"><path d="M10 21H90M10 50H90M10 79H90" /></svg>
              </MapButton>
            </MapButtons>
            <MapButtons $top={1407}>
              <MapButton $h={184}>
                <svg viewBox="0 0 100 100" stroke="#fff" strokeWidth="15" strokeLinecap="round"><path d="M13 50H87M50 13V87" /></svg>
              </MapButton>
              <MapButton $h={187}>
                <svg viewBox="0 0 100 100" stroke="#fff" strokeWidth="15" strokeLinecap="round"><path d="M13 50H87" /></svg>
              </MapButton>
              <MapButton $h={187}>
                <svg viewBox="0 0 100 100" fill="#fff"><circle cx="16" cy="50" r="10.5" /><circle cx="50" cy="50" r="10.5" /><circle cx="84" cy="50" r="10.5" /></svg>
              </MapButton>
            </MapButtons>
          </MapFrame>
          <Tabs>
            <Tab $active $w={401} $pad={71} $gap={9} $track={-1}><InfoIcon />Info</Tab>
            <Tab $w={657} $pad={99} $gap={3} $track={0.4}><BarsIcon />Attributes</Tab>
            <Tab $w={497} $pad={99} $gap={14} $track={0.5}><ShareIcon />Share</Tab>
            <Tab $w={704} $pad={99} $gap={32} $track={-0.7}><CommentIcon />Comments</Tab>
            <Tab $pad={101} $gap={7} $track={0.9}><StarIcon />Favorite</Tab>
          </Tabs>
        </MapColumn>

        <Panel>
          {actions.map(([label, primary, track]) => (
            <PanelRow key={label}>
              <Button $primary={primary} $track={track}>{label}</Button>
            </PanelRow>
          ))}
          <LegendRow $h={570}>
            <Heading $indent={40} $track={-0.8}>Legend</Heading>
            <LegendName>Default Polygon</LegendName>
            <LegendItem><Swatch />Gray Polygon with Black Outline</LegendItem>
          </LegendRow>
          <UsageRow $h={470}>
            <Heading $track={-0.9}>Maps using this layer</Heading>
            <p>This layer is not currently used in any maps.</p>
          </UsageRow>
        </Panel>
      </Columns>

      <BottomStrip>
        <StripLine />
        <StripBox />
      </BottomStrip>

      <Scribble viewBox="0 0 2100 1500">
        <g transform="scale(1.33929 .95663)">
          <path
            d="M1040 342C930 320 850 316 640 314C560 314 520 326 380 345C260 366 140 400 65 460C50 475 41 495 41 513C42 550 75 580 125 605C165 625 205 633 250 648C370 668 540 677 640 681C800 685 950 672 1200 657C1290 648 1370 630 1430 612C1500 585 1510 560 1508 526C1506 500 1500 485 1490 475C1430 420 1370 405 1330 405C1250 390 1150 380 950 380C760 380 660 384 575 418"
            fill="none"
            stroke="#ea3323"
            strokeWidth={27 * SCALE}
            strokeLinecap="round"
            strokeLinejoin="round"
            style={NS}
          />
        </g>
      </Scribble>
    </Page>
  );
}
